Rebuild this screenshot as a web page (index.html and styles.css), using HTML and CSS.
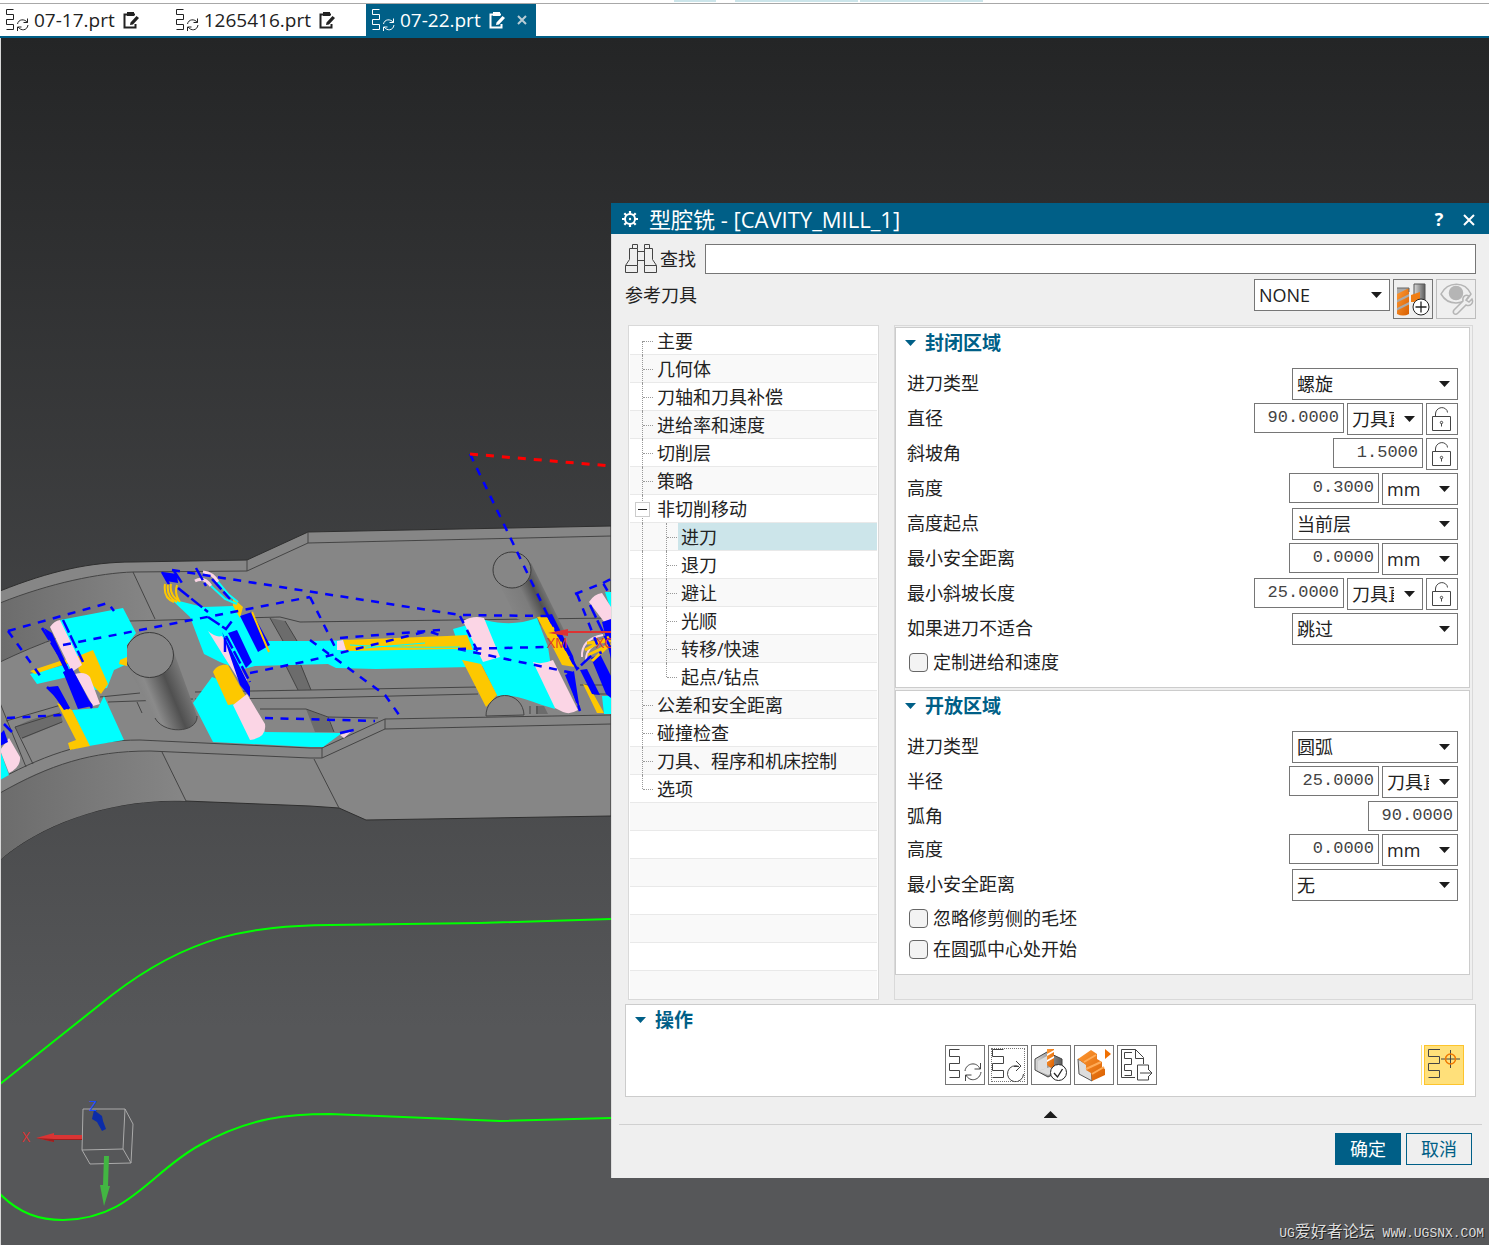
FILE: index.html
```html
<!DOCTYPE html>
<html lang="zh-CN">
<head>
  <meta charset="UTF-8">
  <title>型腔铣 - [CAVITY_MILL_1]</title>
  <link rel="stylesheet" href="styles.css">
</head>
<body>
  <svg class="defs" aria-hidden="true">
    <defs>
      <linearGradient id="orange" x1="0" y1="0" x2="1" y2="1"><stop offset="0" stop-color="#ff9a35"/><stop offset="1" stop-color="#d95f00"/></linearGradient>
      <linearGradient id="metal" x1="0" y1="0" x2="1" y2="0"><stop offset="0" stop-color="#d8d8d8"/><stop offset="1" stop-color="#5c5c5c"/></linearGradient>
      <symbol id="i-path" viewBox="0 0 24 24"><path d="M8.500 1.500h-7v5h7v5h-7v5h7v5h-7"/><path d="M12.500 16c1-5 7-5.500 10-1.500M22.500 10.500v4h-4M23 17c-1 6-7 6-10 2M12.500 23v-4h4"/></symbol>
      <symbol id="i-note" viewBox="0 0 16 18"><path d="M12 3.500H1.500v13h11V13" fill="none" stroke="currentColor" stroke-width="2"/><path d="M4 1h7v4H4zM7.500 11.500l6-6.500 2.500 2-6 6.500-3 .5z" fill="currentColor"/></symbol>
      <symbol id="i-lock" viewBox="0 0 22 26"><path d="M1.500 10.500h18v14h-18zM4.500 10V8c0-6 8-9 11.500-3.500l.5 2"/><circle cx="10.500" cy="16.500" r="1.200"/><path d="M10.500 17.500v3"/></symbol>
    </defs>
  </svg>

  <div class="ribbon"><i></i><i></i><i></i></div>
  <nav class="tabs">
    <a class="tab" href="#"><svg class="tab-path"><use href="#i-path"/></svg><span>07-17.prt</span><svg class="tab-note"><use href="#i-note"/></svg></a>
    <a class="tab" href="#"><svg class="tab-path"><use href="#i-path"/></svg><span>1265416.prt</span><svg class="tab-note"><use href="#i-note"/></svg></a>
    <a class="tab active" href="#"><svg class="tab-path"><use href="#i-path"/></svg><span>07-22.prt</span><svg class="tab-note"><use href="#i-note"/></svg><svg class="tab-close" viewBox="0 0 10 10"><path d="M1 1l8 8M9 1L1 9"/></svg></a>
  </nav>

  <main class="viewport">
    <svg class="scene" viewBox="1 38 1488 1207" preserveAspectRatio="xMinYMin slice">
      <defs>
        <linearGradient id="wall" x1="0" y1="0" x2="1" y2="0"><stop offset="0" stop-color="#6c6c6c"/><stop offset="1" stop-color="#868686"/></linearGradient>
        <linearGradient id="pin" gradientUnits="userSpaceOnUse" x1="137" y1="700" x2="190" y2="678"><stop offset="0" stop-color="#808080"/><stop offset=".25" stop-color="#8a8a8a"/><stop offset=".6" stop-color="#505050"/><stop offset="1" stop-color="#858585"/></linearGradient>
        <linearGradient id="pin2" gradientUnits="userSpaceOnUse" x1="505" y1="605" x2="547" y2="585"><stop offset="0" stop-color="#868686"/><stop offset=".45" stop-color="#7c7c7c"/><stop offset=".7" stop-color="#505050"/><stop offset="1" stop-color="#848484"/></linearGradient>
      </defs>

      <!-- part body -->
      <path fill="#868686" stroke="#2f2f2f" d="M0 591C50 571 90 562 133 562L247 560 308 532 611 526V816L366 820 339 808 310 806 185 801C110 798 40 825 0 860Z"/>
      <path fill="url(#wall)" d="M0 603C50 583 100 573 133 572L155 619 130 621C80 627 40 643 0 662Z"/>
      <path fill="url(#wall)" d="M0 793C50 762 100 750 162 752L186 801C110 798 40 825 0 860Z"/>
      <path fill="#6c6c6c" d="M270 618l13 23h14l-12-20zM284 662l14 28h13l-11-28zM306 709l9 23h19l-7-15zM15 727c15-8 30-12 45-14l3 9-41 17zM536 706h8l4 8h-12z"/>
      <g fill="none" stroke="#444">
        <path d="M0 603C50 583 100 573 133 572L247 571 308 543 611 536M247 560v11M308 532v11M133 572l22 47M0 662C40 643 80 627 130 621L280 617 300 622 611 618"/>
        <path d="M0 779C50 752 90 740 140 740L310 748 322 748 385 719 611 715M0 793C50 765 90 751 150 751L310 758H322L385 729 611 724M322 748v10M385 719v10M162 752l24 49M314 759l25 49"/>
        <path d="M0 703l26 64M15 727l18 37M6 721l55-16M15 727l45-14M22 738l40-16M100 697l40-4M108 702l85-3M137 702l5 11M195 692L310 690 478 687M195 699L310 698 478 694M260 709h46l22 8 50 1M270 618l13 23M285 621l12 20M284 662l14 28M300 663l11 27M328 717l6 15M610 685h-30M611 694h-22M530 706v8M537 706v8"/>
      </g>
      <path fill="url(#pin)" d="M128 667L155 718C164 735 198 733 197 716L172 647Z"/>
      <path fill="none" stroke="#444" d="M155 718C164 735 198 733 197 716"/>
      <ellipse cx="149.500" cy="655" rx="24" ry="22.500" fill="#868686" stroke="#3a3a3a"/>
      <path fill="url(#pin2)" d="M499 584L517 619 565 632 531 563Z"/>
      <ellipse cx="512" cy="570" rx="19" ry="18" fill="#868686" stroke="#3a3a3a"/>

      <!-- machined areas -->
      <g fill="#0ff">
        <path d="M60 620l63-12 13 25-9 12v19l-13 6-7 18-12 2-20-30zM72 710l26-2 6-12 20 44-35 6zM30 674l38-10 4 12-35 8zM0 750l9 25-9 5z"/>
        <path d="M175 600l28 7 30-1 7 8 25 27h45l161-3v29l-95 2-40-1-8-4-73 2-15 4-20-8-16-8-14-37-16-15zM212 677l-19 26 20 39 98 5h12l19-14-77-1-40-50z"/>
        <path d="M485 620c20 5 35 4 52-2l11 29 2 13 5 49c-25-7-40-16-58-13l-16-33-18-4-10-30zM605 592h6v18zM602 696h9v18h-7zM340 655l125-3 20 14-138 2z"/>
      </g>
      <g fill="#fdc800">
        <path d="M76 657l17-7 15 34-7 10-22-23zM30 671l30-10 16-4-8 6-33 11zM57 703l15 7 18 36-20 4-2-7 8-3zM120 660l7-3v9l-8-2z"/>
        <path d="M213 672c3-6 9-8 15-7l17 30-2 8-15 2zM233 598l10 9-3 11-7-12z"/>
        <path d="M343 640l104-4 20-1 6 15-20-1-53 1-55 1zM537 617l11-1 27 51-13-2zM462 660l19 4 16 31-11 12zM583 684l6 2 15 27h-7z"/>
      </g>
      <path fill="#fbd5e5" d="M50 627q4-6 10-7l22 45-10 7zM75 674q10-3 15 3l10 27-7 2zM9 738l11 19q1 10-11 16L0 750zM208 631q8 7 14 5l25 44-2 10zM233 705l14-11 18 30q2 14-15 16zM463 621q10-6 21-3l16 39-17 5zM533 662q9 3 20-2l25 50q-8 5-15 2l-8-4zM589 602q5-8 13-9l9 14v24zM337 641l6-1 3 10h-9zM340 735l12-4-8 7z"/>
      <g fill="#00f">
        <path d="M44 628l8 5 26 56-10-12zM63 672l9-4 20 38-14 3zM48 687l10-1 12 22-6 2zM240 616l12-4 18 33-12 7zM228 633l9-3 15 32-6 6zM222 632l28 55v10l-10-12zM163 572l14 2 1 9-12-2z"/>
        <path d="M0 734l4-4 4 12-8 4zM547 615l5-1 21 42 3 12zM565 675l9-4 6 40zM580 670l7-1 13 26-8-1zM591 658l9-4 11 22v22l-5-4zM602 622l9-3v40z"/>
      </g>
      <g fill="none" stroke="#fdc800" stroke-width="2">
        <path d="M165 584q-2 14 9 18M168 584q-2 13 9 18M171 584q-2 11 8 17M177 585q-3 9 3 17M252 612l17 40M345 646q50-7 122-5M347 641q40 8 124 4M355 650q40-9 110-10"/>
      </g>
      <path d="M350 645q50 3 110 2M365 648l60-5" fill="none" stroke="#0ff"/>
      <path d="M195 581q9-5 16 5M203 572q10 1 15 10" fill="none" stroke="#fbd5e5" stroke-width="3"/>
      <path d="M211 586l14 13 12 5M218 582l10 12 10 8" fill="none" stroke="#0ff" stroke-width="2"/>
      <path d="M486 716a19 20 0 0 1 38-1z" fill="#868686" stroke="#444"/>
      <path d="M582 657q-1-18 21-22M586 660q0-14 18-20" fill="none" stroke="#fbd5e5" stroke-width="2"/>
      <path d="M585 650l24-13M588 655l23-11M587 643l24-2M592 661l15-14" fill="none" stroke="#fdc800" stroke-width="3"/>

      <!-- rapid moves -->
      <g fill="none" stroke="#00f" stroke-width="2.500" stroke-dasharray="8 7.500">
        <path d="M8 631l100-28 6 8M8 631l33 46M63 645L310 597M310 597l27 54M172 570l288 45 90 1M7 718l55-3M470 454l78 162M250 673l58-12 120-30 17 6M310 640l75 55 17 24M265 718l110 3M340 638l100-8M458 649l90-2M458 649l115 24M460 616l20 40M548 616l28 52M575 594l28-11 8 14M577 594l24 60M603 583l8-4"/>
      </g>
      <path d="M42 628l50 80M47 687l22 22M63 620l20 42M64 672l28 34M12 732l-8-8M162 572l8 14M174 571l8 12M178 588l30 24M196 568l10 18M212 579l18 20M226 636l24 46M208 617l18 12 6-8M225 652v-16M547 614l30 55 15-14M568 673l12 38M590 605l21 44M340 733l14-3" fill="none" stroke="#00f" stroke-width="2.500" stroke-dasharray="14 3"/>
      <path d="M470 454L611 466" stroke="#f00" stroke-width="3" stroke-dasharray="8 8" fill="none"/>
      <path d="M558 632h53" stroke="#d33" stroke-width="2"/><path d="M548 633l20-4v7z" fill="#d33"/>
      <text x="547" y="648" class="axis" fill="#d33">XM</text><text x="596" y="648" class="axis" fill="#d33">XC</text>

      <!-- boundary curves -->
      <g fill="none" stroke="#0f0" stroke-width="2">
        <path d="M0 1084L112 995C190 935 250 926 330 925L480 923 611 919"/>
        <path d="M0 1194C20 1214 40 1220 63 1220 130 1219 150 1172 200 1145 250 1117 290 1114 330 1114L500 1121 611 1118"/>
      </g>

      <!-- view triad -->
      <path d="M83 1109h42l-2 40-41 1zM125 1109l8 15-2 39-8-14M82 1150l8 14 41-1" fill="none" stroke="#aaa"/>
      <path d="M82 1135v5H54v2l-18-4 18-5v2z" fill="#d93434"/><path d="M54 1139h28v1H54v2l-18-4z" fill="#9b1f1f"/>
      <path d="M104 1156h5l-1 30h2l-6 20-4-21h3z" fill="#42b642"/>
      <path d="M94 1110l8 6 1 5 3 8-4 2-5-9-5-3z" fill="#0b2ca8"/>
      <text x="22" y="1142" class="axis" fill="#d33">X</text><text x="89" y="1111" class="axis" fill="#1a4bff">Z</text>
    </svg>

    <section class="dialog">
      <header class="titlebar">
        <svg class="gear" viewBox="0 0 16 16"><circle cx="8" cy="8" r="5" fill="none" stroke="#fff" stroke-width="2"/><circle cx="8" cy="8" r="1.200" fill="#fff"/><path d="M8 0v3M8 13v3M0 8h3M13 8h3M2.300 2.300l2 2M11.700 11.700l2 2M13.700 2.300l-2 2M4.300 11.700l-2 2" stroke="#fff" stroke-width="2.200"/></svg>
        <h1>型腔铣 - [CAVITY_MILL_1]</h1>
        <button class="title-btn" type="button" aria-label="帮助">?</button>
        <button class="title-btn" type="button" aria-label="关闭"><svg width="12" height="12" viewBox="0 0 12 12"><path d="M1 1l10 10M11 1L1 11" stroke="#fff" stroke-width="2"/></svg></button>
      </header>

      <div class="content">
        <div class="search">
          <svg class="line binoculars" viewBox="0 0 33 30"><path d="M.5 21.500h12v7H.5zM19.500 21.500h12v7h-12zM12.500 21.500v-17h-8v11l-4 6M19.500 21.500v-17h8v11l4 6M7.500 4.500v-4h5v4M19.500 4.500v-4h5v4M12.500 7.500h7M12.500 16.500h7"/></svg>
          <label for="find">查找</label>
          <input id="find" type="text">
        </div>

        <div class="reference">
          <label for="ref-tool">参考刀具</label>
          <span class="select ref"><select id="ref-tool"><option>NONE</option></select></span>
          <button class="tool" type="button" aria-label="新建刀具"><svg viewBox="0 0 38 38"><path d="M3 8h12v26q-6 3-12 0z" fill="url(#orange)"/><path d="M3 8h12l-12 6zM3 20l12-6v2.500L3 22.500zM3 28l12-6v2.500L3 30.500z" fill="#aaa"/><path d="M3 8h12v4" fill="none" stroke="#666"/><path d="M20 4h11v18H20z" fill="url(#metal)" stroke="#555"/><path d="M17 15l9-3v10h-9z" fill="#f07d13"/><circle cx="27" cy="27" r="8" fill="#fff" stroke="#222"/><path d="M21.500 27h11M27 21.500v11" stroke="#222" stroke-width="1.300"/></svg></button>
          <button class="tool" type="button" aria-label="编辑刀具" disabled><svg viewBox="0 0 38 38" fill="none" stroke="#b5b5b5" stroke-width="1.500"><path d="M4 14C11 1 28 1 34 14 27 26 11 26 4 14z"/><circle cx="19" cy="13" r="6.500" fill="#b5b5b5"/><path d="M26 21c-1-5 3-7 6-5l-3 4 3 2 3-3c2 4-2 8-6 6L21 33c-3 3-6 0-4-3z" fill="#efefef"/></svg></button>
        </div>

        <div class="panels">
          <ul class="tree">
            <li class="first"><i class="twig"></i><span>主要</span></li>
            <li><i class="twig"></i><span>几何体</span></li>
            <li><i class="twig"></i><span>刀轴和刀具补偿</span></li>
            <li><i class="twig"></i><span>进给率和速度</span></li>
            <li><i class="twig"></i><span>切削层</span></li>
            <li><i class="twig"></i><span>策略</span></li>
            <li><i class="twig open"></i><span>非切削移动</span></li>
            <li class="selected"><i class="trunk"></i><i class="twig"></i><span>进刀</span></li>
            <li><i class="trunk"></i><i class="twig"></i><span>退刀</span></li>
            <li><i class="trunk"></i><i class="twig"></i><span>避让</span></li>
            <li><i class="trunk"></i><i class="twig"></i><span>光顺</span></li>
            <li><i class="trunk"></i><i class="twig"></i><span>转移/快速</span></li>
            <li class="last"><i class="trunk"></i><i class="twig"></i><span>起点/钻点</span></li>
            <li><i class="twig"></i><span>公差和安全距离</span></li>
            <li><i class="twig"></i><span>碰撞检查</span></li>
            <li><i class="twig"></i><span>刀具、程序和机床控制</span></li>
            <li class="last"><i class="twig"></i><span>选项</span></li>
            <li></li><li></li><li></li><li></li><li></li><li></li><li></li>
          </ul>

          <div class="settings">
            <section class="group">
              <h2>封闭区域</h2>
              <div class="field"><label for="c-type">进刀类型</label><span class="select wide"><select id="c-type"><option>螺旋</option></select></span></div>
              <div class="field"><label for="c-dia">直径</label><input id="c-dia" class="num" type="text" value="90.0000"><span class="select"><select aria-label="直径单位"><option>刀具直径</option></select></span><button class="lock" type="button" aria-label="锁定直径"><svg><use href="#i-lock"/></svg></button></div>
              <div class="field"><label for="c-ramp">斜坡角</label><input id="c-ramp" class="num" type="text" value="1.5000"><button class="lock" type="button" aria-label="锁定斜坡角"><svg><use href="#i-lock"/></svg></button></div>
              <div class="field"><label for="c-h">高度</label><input id="c-h" class="num" type="text" value="0.3000"><span class="select"><select aria-label="高度单位"><option>mm</option></select></span></div>
              <div class="field"><label for="c-from">高度起点</label><span class="select wide"><select id="c-from"><option>当前层</option></select></span></div>
              <div class="field"><label for="c-safe">最小安全距离</label><input id="c-safe" class="num" type="text" value="0.0000"><span class="select"><select aria-label="安全距离单位"><option>mm</option></select></span></div>
              <div class="field"><label for="c-len">最小斜坡长度</label><input id="c-len" class="num" type="text" value="25.0000"><span class="select"><select aria-label="斜坡长度单位"><option>刀具直径</option></select></span><button class="lock" type="button" aria-label="锁定斜坡长度"><svg><use href="#i-lock"/></svg></button></div>
              <div class="field"><label for="c-else">如果进刀不适合</label><span class="select wide"><select id="c-else"><option>跳过</option></select></span></div>
              <label class="check"><input type="checkbox">定制进给和速度</label>
            </section>

            <section class="group">
              <h2>开放区域</h2>
              <div class="field"><label for="o-type">进刀类型</label><span class="select wide"><select id="o-type"><option>圆弧</option></select></span></div>
              <div class="field"><label for="o-rad">半径</label><input id="o-rad" class="num" type="text" value="25.0000"><span class="select"><select aria-label="半径单位"><option>刀具直径</option></select></span></div>
              <div class="field"><label for="o-arc">弧角</label><input id="o-arc" class="num" type="text" value="90.0000"></div>
              <div class="field"><label for="o-h">高度</label><input id="o-h" class="num" type="text" value="0.0000"><span class="select"><select aria-label="高度单位"><option>mm</option></select></span></div>
              <div class="field"><label for="o-safe">最小安全距离</label><span class="select wide"><select id="o-safe"><option>无</option></select></span></div>
              <label class="check"><input type="checkbox">忽略修剪侧的毛坯</label>
              <label class="check"><input type="checkbox">在圆弧中心处开始</label>
            </section>
          </div>
        </div>

        <section class="group actions">
          <h2>操作</h2>
          <div class="toolbar">
            <div class="tools">
              <button class="tool" type="button" aria-label="生成"><svg class="line" viewBox="0 0 38 38"><path d="M13.500 3.500h-10v7h10v7h-10v7h10v7h-10"/><path d="M19 25c1-8 12-10 15-2M34.500 17v6h-6M35 26c-1 8-11 11-15 3M19.500 35v-6h6"/></svg></button>
              <button class="tool focus" type="button" aria-label="重播"><svg class="line" viewBox="0 0 38 38"><path d="M14.500 3.500H3.500v7h11v7h-11v7h11v7h-11"/><path d="M30 20.500A8 8 0 1 0 34.500 28M30 20.500h-5M27 15l5 5-5 5"/></svg></button>
              <button class="tool" type="button" aria-label="确认"><svg viewBox="0 0 38 38"><path d="M3 13l12-7 15 7v11l-14 7-13-7z" fill="url(#metal)" stroke="#444"/><path d="M6 15l9-5v12l-9 3zM15 22l13-4v6l-12 5-9-4z" fill="#ddd"/><path d="M15 3h7v17l-3 2-4-3z" fill="url(#orange)"/><path d="M15 8l7-4v2l-7 4zM15 14l7-4v2l-7 4z" fill="#fff"/><circle cx="26.500" cy="26.500" r="8" fill="#fff" stroke="#222"/><path d="M22 27l3.500 4 5-8" fill="none" stroke="#222" stroke-width="1.300"/></svg></button>
              <button class="tool" type="button" aria-label="过切检查"><svg viewBox="0 0 38 38"><path d="M3 13l13 8 1 14-13-7z" fill="#ddd" stroke="#555"/><path d="M3 13l13-9 6 4v5l5 3v5l3 2v6l-13 6-1-8-5-3v-5z" fill="url(#orange)"/><path d="M9 16l12-7M11 23l15-7M17 28l12-7" stroke="#ffac58" stroke-width="2"/><path d="M30 3l6 5-6 5z" fill="#f06f00"/></svg></button>
              <button class="tool" type="button" aria-label="列表"><svg class="line" viewBox="0 0 38 38"><path d="M17 31.500H3.500v-28h14l8 8V18M17.500 3.500v9h8M14 6.500H6.500v6h7v6h-7v6h7v5h-7M30.500 23v-4h-11v15h11v-4M22 27h12M30 23l4 4-4 4"/></svg></button>
            </div>
            <div class="display"><button class="tool on" type="button" aria-label="显示刀轨"><svg class="line" viewBox="0 0 38 38"><path d="M15 3.500H3.500v7h11v7h-11v7h11v7h-11"/><path d="M16 13h19M25.500 4v18"/><circle cx="25.500" cy="13" r="5" stroke="#f07800" stroke-width="1.500"/></svg></button></div>
          </div>
        </section>
      </div>

      <button class="collapse" type="button" aria-label="收起"></button>
      <footer>
        <button class="primary" type="button">确定</button>
        <button type="button">取消</button>
      </footer>
    </section>

    <p class="watermark">UG<span>爱好者论坛</span> WWW.UGSNX.COM</p>
  </main>
</body>
</html>
```

FILE: styles.css
```css
* {
  box-sizing: border-box;
}

body {
  display: flex;
  flex-direction: column;
  min-height: 100vh;
  margin: 0;
  background: #fff;
  color: #222;
  font-family: "Open Sans", "Noto Sans CJK SC", sans-serif;
  font-size: 18px;
  line-height: 24px;
}

button,
input,
select {
  margin: 0;
  font: inherit;
  color: inherit;
}

button {
  padding: 0;
  cursor: pointer;
}

.defs {
  position: absolute;
  width: 0;
  height: 0;
}

.line {
  fill: none;
  stroke: #444;
}

/* ribbon and file tabs */
.ribbon {
  display: flex;
  gap: 2px;
  height: 4px;
  padding-left: 674px;
  border-bottom: 1px solid #a8a8a8;
}

.ribbon i {
  width: 123px;
  height: 2px;
  background: #cce5ea;
}

.ribbon i:first-child {
  width: 42px;
  margin-right: 17px;
}

.tabs {
  display: flex;
  height: 34px;
  border-bottom: 2px solid #005f87;
}

.tab {
  display: flex;
  align-items: center;
  padding: 0 31px 0 5px;
  color: #222;
  font-size: 19px;
  text-decoration: none;
}

.tab.active {
  padding-right: 9px;
  background: #005f87;
  color: #fff;
}

.tab-path {
  width: 24px;
  height: 24px;
  margin-right: 5px;
  fill: none;
  stroke: currentColor;
}

.tab-note {
  width: 16px;
  height: 18px;
  margin-left: 8px;
}

.tab-close {
  width: 10px;
  height: 10px;
  margin-left: 12px;
  stroke: #b9cdd6;
  stroke-width: 2;
}

/* graphics area */
.viewport {
  position: relative;
  flex: 1;
  min-height: 1207px;
  border-left: 1px solid #d8d8d8;
  background: linear-gradient(#242526, #565759 82%);
}

.scene {
  position: absolute;
  top: 0;
  left: 0;
  width: 100%;
  height: 100%;
}

.axis {
  font-size: 14px;
}

.watermark {
  position: absolute;
  right: 5px;
  bottom: 0;
  margin: 0;
  color: #ddd;
  font-family: "Liberation Mono", "Noto Sans CJK SC", monospace;
  font-size: 13px;
  line-height: 22px;
  text-shadow: 1px 1px #222;
}

.watermark span {
  font-size: 16px;
}

/* dialog */
.dialog {
  position: absolute;
  top: 165px;
  right: 0;
  width: 878px;
  border-left: 1px solid #ddd;
  background: #efefef;
}

.titlebar {
  display: flex;
  align-items: center;
  height: 31px;
  margin-left: -1px;
  padding: 0 10px 0 11px;
  background: #005f87;
  color: #fff;
}

.titlebar h1 {
  flex: 1;
  margin: 0 0 0 11px;
  font-size: 22px;
  font-weight: normal;
}

.gear {
  width: 16px;
  height: 16px;
}

.title-btn {
  width: 20px;
  margin-left: 10px;
  border: 0;
  background: none;
  font-weight: bold;
}

.content {
  padding: 10px 13px 0;
}

.search {
  display: flex;
  align-items: center;
}

.binoculars {
  width: 33px;
  height: 30px;
  margin-right: 2px;
}

.search input {
  flex: 1;
  height: 30px;
  margin-left: 9px;
  border: 1px solid #767676;
  background: #fff;
}

.reference {
  display: flex;
  align-items: flex-start;
  gap: 3px;
  margin: 5px 0 6px;
}

.reference label {
  flex: 1;
  line-height: 32px;
}

.select {
  position: relative;
  width: 76px;
}

.select.wide {
  width: 166px;
}

.select.ref {
  width: 136px;
}

.select::after {
  content: "";
  position: absolute;
  top: 13px;
  right: 8px;
  width: 11px;
  height: 6px;
  background: #1c1c1c;
  clip-path: polygon(0 0, 100% 0, 50% 100%);
  pointer-events: none;
}

.select select {
  display: block;
  width: 100%;
  height: 32px;
  padding: 0 28px 0 4px;
  border: 1px solid #767676;
  border-radius: 0;
  background: #fff;
  appearance: none;
}

.tool {
  display: block;
  width: 40px;
  height: 40px;
  border: 1px solid #767676;
  background: #fff;
}

.tool svg {
  display: block;
  width: 38px;
  height: 38px;
}

.reference .tool {
  background: #efefef;
}

.tool:disabled {
  border-color: #bdbdbd;
}

.panels {
  display: flex;
  gap: 15px;
  margin: 0 3px 4px;
}

/* navigation tree */
.tree {
  width: 251px;
  margin: 0;
  padding: 1px 1px 0;
  border: 1px solid #d9d9d9;
  background: #fff;
  list-style: none;
}

.tree li {
  display: flex;
  height: 28px;
  padding-left: 12px;
  border-bottom: 1px solid #e9e9e9;
  line-height: 29px;
}

.tree li:nth-child(even) {
  background: #f9f9f9;
}

.tree li:last-child {
  border-bottom: 0;
}

.tree span {
  flex: 1;
  padding-left: 3px;
}

.tree .selected span {
  background: #cce5ea;
}

.twig,
.trunk {
  position: relative;
  width: 12px;
}

.trunk {
  width: 24px;
}

.twig::before,
.trunk::before {
  content: "";
  position: absolute;
  top: 0;
  bottom: -1px;
  left: 0;
  border-left: 1px dotted #999;
}

.first .twig::before {
  top: 14px;
}

.last .twig::before {
  bottom: 13px;
}

.twig::after {
  content: "";
  position: absolute;
  top: 14px;
  left: 1px;
  width: 10px;
  border-top: 1px dotted #999;
}

.twig.open::after {
  top: 7px;
  left: -7px;
  width: 13px;
  height: 13px;
  border: 1px solid #ccc;
  background: linear-gradient(#222, #222) center / 9px 1px no-repeat #fff;
}

/* settings */
.settings {
  flex: 1;
  padding: 1px 2px 0 0;
  border: 1px solid #d9d9d9;
}

.group {
  display: flex;
  flex-direction: column;
  gap: 3px;
  padding: 0 11px 11px;
  border: 1px solid #ccc;
  background: #fff;
}

.group + .group {
  margin-top: 2px;
}

.group h2 {
  display: flex;
  align-items: center;
  gap: 9px;
  height: 30px;
  margin: 0 0 7px -2px;
  color: #005f87;
  font-size: 19px;
}

.group h2::before {
  content: "";
  width: 11px;
  height: 6px;
  background: #005f87;
  clip-path: polygon(0 0, 100% 0, 50% 100%);
}

.field {
  display: flex;
  align-items: flex-start;
  gap: 3px;
}

.field label {
  flex: 1;
  line-height: 30px;
}

.num {
  width: 90px;
  height: 30px;
  padding: 0 4px 2px;
  border: 1px solid #767676;
  background: #fff;
  color: #444;
  font-family: "Liberation Mono", monospace;
  font-size: 17px;
  text-align: right;
}

.lock {
  display: grid;
  place-items: center;
  width: 32px;
  height: 32px;
  border: 1px solid #767676;
  background: #fff;
}

.lock svg {
  width: 22px;
  height: 26px;
  fill: none;
  stroke: #444;
}

.check {
  display: flex;
  align-items: center;
  gap: 5px;
  height: 28px;
  padding-left: 2px;
}

.check input {
  width: 19px;
  height: 19px;
  border: 1px solid #666;
  border-radius: 4px;
  background: #f3f3f3;
  appearance: none;
}

/* operations */
.toolbar {
  display: grid;
  grid-template-columns: 1fr auto 1fr;
}

.tools {
  display: flex;
  grid-column: 2;
  gap: 3px;
}

.focus svg {
  outline: 1px dotted #777;
  outline-offset: -3px;
}

.display {
  justify-self: end;
  padding-left: 2px;
  border-left: 1px solid #ffe07a;
}

.tool.on {
  border-color: #fdc42c;
  background: #ffe07a;
}

.collapse {
  display: block;
  width: 14px;
  height: 7px;
  margin: 14px auto 6px;
  border: 0;
  background: #1c1c1c;
  clip-path: polygon(50% 0, 100% 100%, 0 100%);
}

footer {
  display: flex;
  justify-content: flex-end;
  gap: 5px;
  margin: 0 7px;
  padding: 8px 10px 13px;
  border-top: 1px solid #d0d0d0;
}

footer button {
  width: 66px;
  height: 32px;
  border: 1px solid #005f87;
  background: #efefef;
  color: #005f87;
}

footer .primary {
  background: #005f87;
  color: #fff;
}
```
